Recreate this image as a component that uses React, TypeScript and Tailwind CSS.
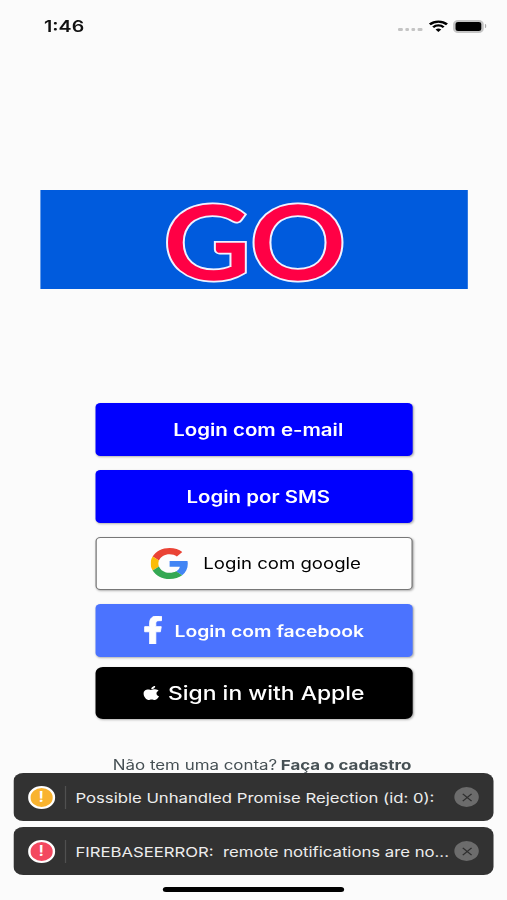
import type { ReactNode } from "react";
import { FaApple, FaFacebookF } from "react-icons/fa";

// The screen is laid out 414 wide and stretched to the 507 wide window.
export default function App() {
    return (
        <div className="h-[900px] w-[507px] overflow-hidden bg-[#fbfbfb] font-['Inter',sans-serif]">
            <main className="relative flex h-[900px] w-[414px] origin-top-left scale-x-[1.2246] flex-col items-center">
                <StatusBar />
                <Logo />
                <div className="mt-[114.5px] ml-[0.8px] flex w-[259.6px] flex-col">
                    <LoginButton className="mb-[14.5px] bg-[#0000ff] pl-[7px] text-[16.7px] font-semibold text-white">
                        <span className="mt-0.5">Login com e-mail</span>
                    </LoginButton>
                    <LoginButton className="mb-[14.5px] bg-[#0000ff] pl-[7px] text-[16.7px] font-semibold text-white">
                        <span className="mt-0.5">Login por SMS</span>
                    </LoginButton>
                    <LoginButton className="mb-[14.5px] border border-[#777] bg-[#fdfdfd] pl-[3px] text-[15.2px] text-black">
                        <GoogleLogo />
                        <span className="mt-[3px] ml-[12px]">Login com google</span>
                    </LoginButton>
                    <LoginButton className="mb-2.5 bg-[#4b73ff] text-[15.8px] font-semibold text-white">
                        <FaFacebookF
                            className="h-[28px] w-[16px]"
                            preserveAspectRatio="none"
                            strokeWidth="16"
                            stroke="white"
                        />
                        <span className="mt-[3px] ml-[9px]">Login com facebook</span>
                    </LoginButton>
                    <LoginButton className="rounded-[6px] bg-black text-[18.7px] font-medium text-white">
                        <FaApple className="h-[16px] w-[13px]" preserveAspectRatio="none" />
                        <span className="mt-0.5 ml-[7px]">Sign in with Apple</span>
                    </LoginButton>
                </div>
                <p className="mt-[35.5px] ml-[14px] text-[13.8px] leading-5 whitespace-nowrap text-[#465054]">
                    Não tem uma conta?{" "}
                    <a href="#" className="-ml-px font-bold">
                        Faça o cadastro
                    </a>
                </p>

                <div className="absolute inset-x-[10.6px] top-[773px] flex flex-col gap-[6px]">
                    <LogToast color="bg-[#f9b32f]">Possible Unhandled Promise Rejection (id: 0):</LogToast>
                    <LogToast color="bg-[#f3485f]">
                        FIREBASEERROR:&nbsp; remote notifications are no...
                    </LogToast>
                </div>
                <div className="absolute top-[887px] left-[133.3px] h-[5px] w-[148px] rounded-full bg-black" />
            </main>
        </div>
    );
}

function StatusBar() {
    return (
        <header className="flex h-[52px] w-full shrink-0 items-center justify-between pr-[17px] pl-9">
            <time className="text-[16px] font-semibold text-[#111]">1:46</time>
            <div className="flex items-center">
                <div className="mt-[7px] mr-[5px] flex gap-[2px]">
                    {[0, 1, 2, 3].map((dot) => (
                        <i key={dot} className="h-[3.5px] w-[3.3px] rounded-[1px] bg-[#c4c4c4]" />
                    ))}
                </div>
                <svg viewBox="0 0 16 12" className="mr-[4px] h-3 w-4" fill="none" stroke="black" strokeWidth="2.2">
                    <path d="M1 4.4a10 10 0 0 1 14 0" />
                    <path d="M3.7 7.2a6.2 6.2 0 0 1 8.6 0" />
                    <path d="M5.7 9.5a3.3 3.3 0 0 1 4.6 0L8 11.9z" fill="black" stroke="none" />
                </svg>
                <div className="h-[13px] w-[25px] rounded-[4px] border-2 border-[#c4c4c4] bg-[#c4c4c4]">
                    <div className="h-full rounded-[2px] bg-black" />
                </div>
                <i className="ml-px h-1 w-[1.5px] rounded-r-full bg-[#aaa]" />
            </div>
        </header>
    );
}

const letters = [
    { char: "G", x: 123.5, width: 86 },
    { char: "O", x: 210, width: 95 },
];

function Logo() {
    return (
        <div className="mt-[137.5px] ml-[0.8px] h-[99px] w-[349.5px] shrink-0 bg-[#005bdd]">
            <svg
                viewBox="0 0 428 99"
                preserveAspectRatio="none"
                className="h-full w-full overflow-visible"
                fontFamily="Lato, sans-serif"
                fontWeight="400"
                fontSize="101"
                strokeMiterlimit="10"
            >
                {letters.map(({ char, x, width }) => (
                    <text
                        key={char}
                        x={x}
                        y="89"
                        textLength={width}
                        lengthAdjust="spacingAndGlyphs"
                        fill="#ff0045"
                        stroke="#eef2ff"
                        strokeWidth="6"
                    >
                        {char}
                    </text>
                ))}
                {letters.map(({ char, x, width }) => (
                    <text
                        key={char}
                        aria-hidden
                        x={x}
                        y="89"
                        textLength={width}
                        lengthAdjust="spacingAndGlyphs"
                        fill="#ff0045"
                        stroke="#ff0045"
                        strokeWidth="2.6"
                    >
                        {char}
                    </text>
                ))}
            </svg>
        </div>
    );
}

type LoginButtonProps = {
    className: string;
    children: ReactNode;
};

function LoginButton({ className, children }: LoginButtonProps) {
    return (
        <button
            className={`flex h-[52.5px] items-center justify-center rounded-[4px] whitespace-nowrap shadow-[1px_1px_2px_rgba(0,0,0,0.3)] ${className}`}
        >
            {children}
        </button>
    );
}

function GoogleLogo() {
    return (
        <svg viewBox="0 0 48 48" className="h-[31px] w-[31px]">
            <path
                fill="#EA4335"
                d="M24 9.5c3.54 0 6.71 1.22 9.21 3.6l6.85-6.85C35.9 2.38 30.47 0 24 0 14.62 0 6.51 5.38 2.56 13.22l7.98 6.19C12.43 13.72 17.74 9.5 24 9.5z"
            />
            <path
                fill="#4285F4"
                d="M46.98 24.55c0-1.57-.15-3.09-.38-4.55H24v9.02h12.94c-.58 2.96-2.26 5.48-4.78 7.18l7.73 6c4.51-4.18 7.09-10.36 7.09-17.65z"
            />
            <path
                fill="#FBBC05"
                d="M10.53 28.59c-.48-1.45-.76-2.99-.76-4.59s.27-3.14.76-4.59l-7.98-6.19C.92 16.46 0 20.12 0 24c0 3.88.92 7.54 2.56 10.78l7.97-6.19z"
            />
            <path
                fill="#34A853"
                d="M24 48c6.48 0 11.93-2.13 15.89-5.81l-7.73-6c-2.15 1.45-4.92 2.3-8.16 2.3-6.26 0-11.57-4.22-13.47-9.91l-7.98 6.19C6.51 42.62 14.62 48 24 48z"
            />
        </svg>
    );
}

type LogToastProps = {
    color: string;
    children: ReactNode;
};

function LogToast({ color, children }: LogToastProps) {
    return (
        <div className="flex h-12 items-center rounded-[8px] bg-[#323232] px-3">
            <span
                className={`grid h-[23px] w-[22px] shrink-0 place-items-center rounded-full border-2 border-white text-[14px] leading-none font-semibold text-white ${color}`}
            >
                !
            </span>
            <span className="ml-[8px] h-[23px] w-px shrink-0 bg-[#505050]" />
            <span className="mt-0.5 ml-2 min-w-0 flex-1 text-[13.65px] whitespace-nowrap text-[#ededed]">
                {children}
            </span>
            <span className="grid h-5 w-5 shrink-0 place-items-center rounded-full bg-[#6c6c6c]">
                <svg viewBox="0 0 10 10" className="h-[9px] w-[9px]" stroke="#2f2f2f" strokeWidth="1.3">
                    <path d="M1 1l8 8M9 1l-8 8" />
                </svg>
            </span>
        </div>
    );
}
